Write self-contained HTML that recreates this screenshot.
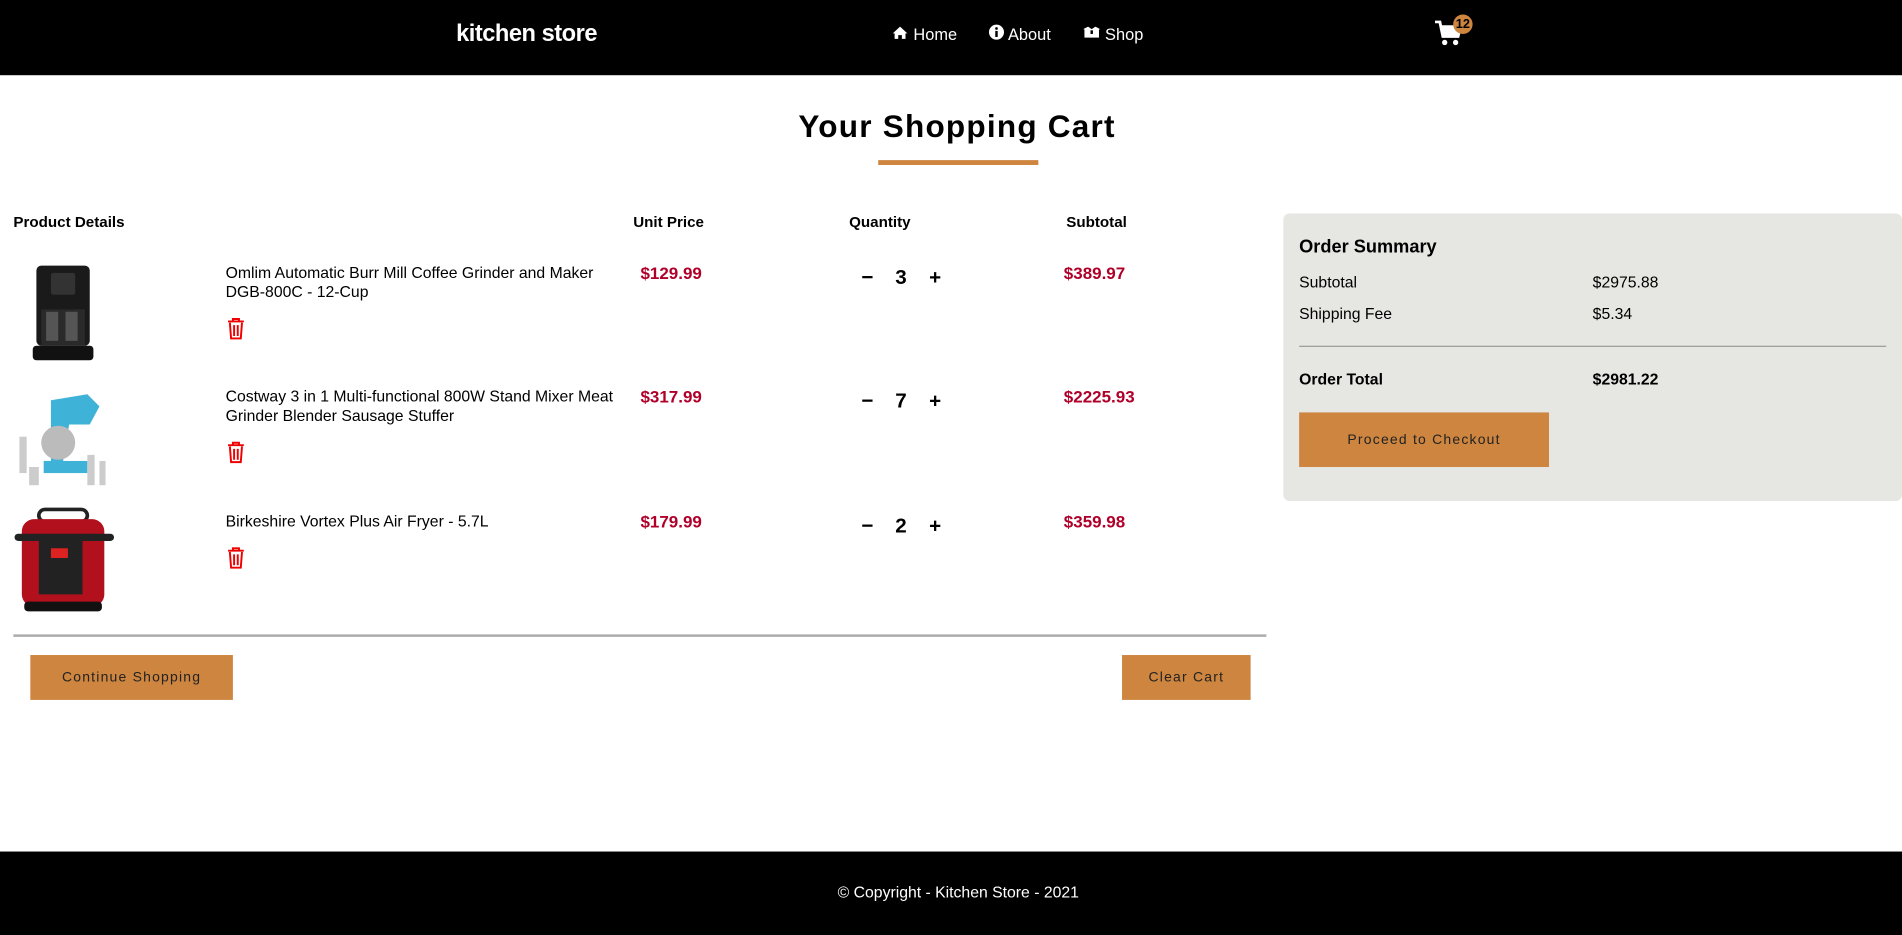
<!DOCTYPE html>
<html><head><meta charset="utf-8"><style>
html,body{margin:0;padding:0;width:1902px;height:935px;overflow:hidden;background:#fff}
#w{position:absolute;left:0;top:0;width:1568px;height:771px;transform:scale(1.21301);transform-origin:0 0;font-family:"Liberation Sans",sans-serif;color:#000}
.a{position:absolute;white-space:nowrap}
.hdr{position:absolute;left:0;top:0;width:1568px;height:62px;background:#000}
.nav{color:#fff;font-size:13.5px;top:21px}
.th{font-weight:bold;font-size:12.5px;top:176px}
.pt{font-size:13px;line-height:16px}
.pr{color:#b0002a;font-weight:bold;font-size:14px}
.q{font-weight:bold;font-size:17px}
.btn{position:absolute;background:#cd853f;font-size:11.5px;letter-spacing:1px;display:flex;align-items:center;justify-content:center;color:#222}
.sm{font-size:13px}
</style></head><body><div id="w">
<div class="hdr"></div>
<div class="a" style="left:376px;top:17px;color:#fff;font-weight:bold;font-size:19.5px;letter-spacing:-0.4px">kitchen store</div>
<svg class="a" style="left:735px;top:21px" width="14" height="12" viewBox="0 0 14 12"><path d="M7 1 L1 6.5 L2.5 6.5 L2.5 11 L5.5 11 L5.5 8 L8.5 8 L8.5 11 L11.5 11 L11.5 6.5 L13 6.5 Z" fill="#fff"/></svg>
<div class="a nav" style="left:753px">Home</div>
<svg class="a" style="left:815px;top:20px" width="13" height="13"><circle cx="6.5" cy="6.5" r="6.2" fill="#fff"/><rect x="5.5" y="5.5" width="2" height="5" fill="#000"/><circle cx="6.5" cy="3.5" r="1.1" fill="#000"/></svg>
<div class="a nav" style="left:831px">About</div>
<svg class="a" style="left:893px;top:22px" width="14" height="10"><rect x="1" y="2" width="12" height="7" fill="#fff"/><path d="M0 2 L4 0 L7 2 L10 0 L14 2 L7 4Z" fill="#fff"/><rect x="6" y="3" width="2" height="3" fill="#000"/></svg>
<div class="a nav" style="left:911px">Shop</div>
<svg class="a" style="left:1183px;top:17px" width="24" height="22" viewBox="0 0 24 22"><path d="M0 1 L4 1 L6.5 13 L19 13 L21 5 L5.5 5" fill="none" stroke="#fff" stroke-width="2.4"/><path d="M5 4 L21 4 L19 13 L6.5 13Z" fill="#fff"/><circle cx="8" cy="18" r="2.2" fill="#fff"/><circle cx="17" cy="18" r="2.2" fill="#fff"/></svg>
<div class="a" style="left:1198px;top:12px;width:16px;height:16px;border-radius:50%;background:#cd853f;font-size:10.5px;font-weight:bold;text-align:center;line-height:16px;color:#000">12</div>

<div class="a" style="left:0;width:1578px;text-align:center;top:89px;font-size:26px;font-weight:bold;letter-spacing:1px">Your Shopping Cart</div>
<div class="a" style="left:724px;top:132px;width:132px;height:4px;background:#cd853f"></div>

<div class="a th" style="left:11px">Product Details</div>
<div class="a th" style="left:522px">Unit Price</div>
<div class="a th" style="left:700px">Quantity</div>
<div class="a th" style="left:879px">Subtotal</div>

<!-- row 1 -->
<svg class="a" style="left:22px;top:215px" width="60" height="86"><rect x="8" y="4" width="44" height="66" rx="4" fill="#1a1a1a"/><rect x="20" y="10" width="20" height="18" rx="2" fill="#333"/><rect x="12" y="40" width="36" height="30" fill="#2a2a2a"/><rect x="16" y="42" width="10" height="24" fill="#555"/><rect x="32" y="42" width="10" height="24" fill="#555"/><rect x="5" y="70" width="50" height="12" rx="3" fill="#111"/></svg>
<div class="a pt" style="left:186px;top:217px">Omlim Automatic Burr Mill Coffee Grinder and Maker<br>DGB-800C - 12-Cup</div>
<div class="a pr" style="left:528px;top:217px">$129.99</div>
<div class="a q" style="left:710px;top:219px">−</div><div class="a q" style="left:738px;top:219px">3</div><div class="a q" style="left:766px;top:219px">+</div>
<div class="a pr" style="left:877px;top:217px">$389.97</div>

<!-- row 2 -->
<svg class="a" style="left:12px;top:320px" width="82" height="84"><path d="M30 10 L60 5 L70 15 L62 30 L45 30 L40 60 L30 62 Z" fill="#3fb2d8"/><ellipse cx="36" cy="45" rx="14" ry="14" fill="#bbb"/><rect x="24" y="60" width="36" height="10" fill="#3fb2d8"/><g fill="#ccc"><rect x="4" y="40" width="6" height="30"/><rect x="60" y="55" width="6" height="25"/><rect x="70" y="60" width="5" height="20"/><rect x="12" y="65" width="8" height="15"/></g></svg>
<div class="a pt" style="left:186px;top:319px">Costway 3 in 1 Multi-functional 800W Stand Mixer Meat<br>Grinder Blender Sausage Stuffer</div>
<div class="a pr" style="left:528px;top:319px">$317.99</div>
<div class="a q" style="left:710px;top:321px">−</div><div class="a q" style="left:738px;top:321px">7</div><div class="a q" style="left:766px;top:321px">+</div>
<div class="a pr" style="left:877px;top:319px">$2225.93</div>

<!-- row 3 -->
<svg class="a" style="left:10px;top:418px" width="86" height="90"><rect x="22" y="2" width="40" height="10" rx="5" fill="none" stroke="#222" stroke-width="3"/><rect x="8" y="10" width="68" height="72" rx="10" fill="#b3101e"/><rect x="2" y="22" width="82" height="6" rx="3" fill="#222"/><rect x="22" y="28" width="36" height="44" fill="#222"/><rect x="32" y="34" width="14" height="8" fill="#d22"/><rect x="10" y="78" width="64" height="8" rx="3" fill="#111"/></svg>
<div class="a pt" style="left:186px;top:422px">Birkeshire Vortex Plus Air Fryer - 5.7L</div>
<div class="a pr" style="left:528px;top:422px">$179.99</div>
<div class="a q" style="left:710px;top:424px">−</div><div class="a q" style="left:738px;top:424px">2</div><div class="a q" style="left:766px;top:424px">+</div>
<div class="a pr" style="left:877px;top:422px">$359.98</div>

<!-- trash icons -->
<svg class="a" style="left:187px;top:262px" width="15" height="18" viewBox="0 0 15 18"><path d="M1 3 H14 M5 3 V1 H10 V3 M2.5 4 L3.5 17 H11.5 L12.5 4 M6 6 V15 M9 6 V15" fill="none" stroke="#e00" stroke-width="1.6"/></svg>
<svg class="a" style="left:187px;top:364px" width="15" height="18" viewBox="0 0 15 18"><path d="M1 3 H14 M5 3 V1 H10 V3 M2.5 4 L3.5 17 H11.5 L12.5 4 M6 6 V15 M9 6 V15" fill="none" stroke="#e00" stroke-width="1.6"/></svg>
<svg class="a" style="left:187px;top:451px" width="15" height="18" viewBox="0 0 15 18"><path d="M1 3 H14 M5 3 V1 H10 V3 M2.5 4 L3.5 17 H11.5 L12.5 4 M6 6 V15 M9 6 V15" fill="none" stroke="#e00" stroke-width="1.6"/></svg>

<div class="a" style="left:11px;top:523px;width:1033px;height:2px;background:#aaa"></div>
<div class="btn" style="left:25px;top:540px;width:167px;height:37px">Continue Shopping</div>
<div class="btn" style="left:925px;top:540px;width:106px;height:37px">Clear Cart</div>

<!-- summary -->
<div class="a" style="left:1058px;top:176px;width:510px;height:237px;background:#e6e6e2;border-radius:5px"></div>
<div class="a" style="left:1071px;top:195px;font-size:15px;font-weight:bold">Order Summary</div>
<div class="a sm" style="left:1071px;top:225px">Subtotal</div><div class="a sm" style="left:1313px;top:225px">$2975.88</div>
<div class="a sm" style="left:1071px;top:251px">Shipping Fee</div><div class="a sm" style="left:1313px;top:251px">$5.34</div>
<div class="a" style="left:1071px;top:285px;width:484px;height:1px;background:#999"></div>
<div class="a sm" style="left:1071px;top:305px;font-weight:bold">Order Total</div><div class="a sm" style="left:1313px;top:305px;font-weight:bold">$2981.22</div>
<div class="btn" style="left:1071px;top:340px;width:206px;height:45px">Proceed to Checkout</div>

<div class="a" style="left:0;top:702px;width:1568px;height:69px;background:#000"></div>
<div class="a" style="left:0;width:1580px;text-align:center;top:728px;color:#fff;font-size:13px">© Copyright - Kitchen Store - 2021</div>
</div></body></html>
